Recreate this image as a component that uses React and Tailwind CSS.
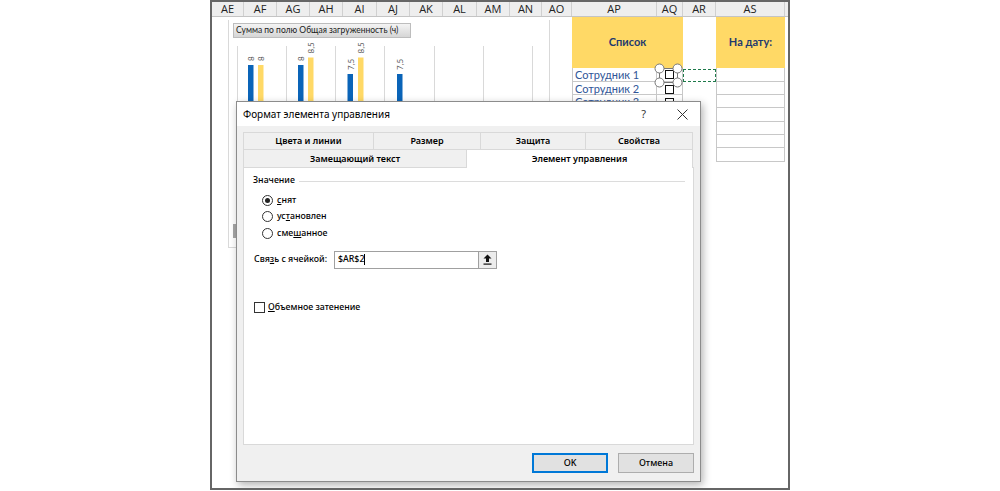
import React from 'react';

const cols = [
  { l: 'AE', w: 'w-[32px]' },
  { l: 'AF', w: 'w-[33px]' },
  { l: 'AG', w: 'w-[33px]' },
  { l: 'AH', w: 'w-[33px]' },
  { l: 'AI', w: 'w-[34px]' },
  { l: 'AJ', w: 'w-[33px]' },
  { l: 'AK', w: 'w-[33px]' },
  { l: 'AL', w: 'w-[34px]' },
  { l: 'AM', w: 'w-[33px]' },
  { l: 'AN', w: 'w-[32px]' },
  { l: 'AO', w: 'w-[30px]' },
  { l: 'AP', w: 'w-[85px]' },
  { l: 'AQ', w: 'w-[26px]' },
  { l: 'AR', w: 'w-[33px]' },
  { l: 'AS', w: 'w-[69px]' },
];

const rows = [
  { h: 'h-[14px]', name: 'Сотрудник 1' },
  { h: 'h-[13px]', name: 'Сотрудник 2' },
  { h: 'h-[13px]', name: 'Сотрудник 3' },
  { h: 'h-[14px]', name: '' },
  { h: 'h-[13px]', name: '' },
  { h: 'h-[13px]', name: '' },
  { h: 'h-[14px]', name: '' },
];

const bars = [
  { x: 19, top: 45, c: '#0a64b8', t: '8' },
  { x: 29, top: 45, c: '#ffd966', t: '8' },
  { x: 69, top: 45, c: '#0a64b8', t: '8' },
  { x: 79, top: 37.5, c: '#ffd966', t: '8,5' },
  { x: 118.5, top: 54, c: '#0a64b8', t: '7,5' },
  { x: 129, top: 37.5, c: '#ffd966', t: '8,5' },
  { x: 168, top: 54, c: '#0a64b8', t: '7,5' },
];

const grid = [8, 57, 106, 155, 205, 254, 303];

function Chart() {
  return (
    <div className="absolute left-[16px] top-[3px] w-[322px] h-[228px] bg-white border-x border-b border-[#d9d9d9]">
      <svg className="absolute left-0 top-0" width="322" height="228">
        {grid.map((g) => (
          <line key={g} x1={g + 0.5} y1="26" x2={g + 0.5} y2="228" stroke="#d9d9d9" strokeWidth="1" />
        ))}
        {bars.map((b, i) => (
          <g key={i}>
            <rect x={b.x} y={b.top} width="5.5" height="160" fill={b.c} />
            <text
              transform={`translate(${b.x + 3.2} ${b.top - 4}) rotate(-90)`}
              fontSize="8"
              fill="#595959"
              fontFamily="Lato, 'Liberation Sans', sans-serif"
              dominantBaseline="central"
            >
              {b.t}
            </text>
          </g>
        ))}
        <rect x="4" y="204" width="4" height="14" fill="#a6a6a6" />
      </svg>
      <div className="absolute left-[4px] top-[3px] w-[178px] h-[15px] border border-[#bdbdbd] bg-gradient-to-b from-[#f4f4f4] to-[#d6d6d6] flex items-center pl-[2px] text-[8.5px] text-[#1a1a1a] font-['Lato','Liberation_Sans',sans-serif] whitespace-nowrap">
        Сумма по полю Общая загруженность (ч)
      </div>
    </div>
  );
}

function Radio({ checked, children }) {
  return (
    <div className="flex items-center h-[16.5px] pl-[18px]">
      <div className="w-[11px] h-[11px] rounded-full border border-[#333] bg-white flex items-center justify-center">
        {checked && <div className="w-[5px] h-[5px] rounded-full bg-[#222]" />}
      </div>
      <span className="ml-[4px]">{children}</span>
    </div>
  );
}

function Dialog() {
  const tab1 = [
    { t: 'Цвета и линии', w: 'w-[131px]' },
    { t: 'Размер', w: 'w-[107px]' },
    { t: 'Защита', w: 'w-[105px]' },
    { t: 'Свойства', w: 'w-[107px]' },
  ];
  return (
    <div className="absolute left-[24px] top-[84px] w-[465px] h-[381px] border border-[#8c8c8c] bg-[#f0f0f0] shadow-[2px_3px_8px_rgba(0,0,0,0.3)] flex flex-col font-['Noto_Sans','Open_Sans',sans-serif] text-black">
      <div className="h-[24px] bg-white flex items-center pl-[6px] shrink-0">
        <span className="text-[10px]">Формат элемента управления</span>
        <span className="ml-auto text-[11px] text-[#333] mr-[31px]">?</span>
        <svg width="11" height="11" className="mr-[12px]" viewBox="0 0 11 11">
          <path d="M0.5 0.5 L10.5 10.5 M10.5 0.5 L0.5 10.5" stroke="#333" strokeWidth="1" />
        </svg>
      </div>
      <div className="flex flex-col px-[6px] pt-[6px] flex-1">
        <div className="flex h-[17px] text-[9px] font-semibold">
          {tab1.map((t, i) => (
            <div
              key={t.t}
              className={`${t.w} border-t border-r border-[#d9d9d9] flex items-center justify-center ${i === 0 ? 'border-l' : ''}`}
            >
              {t.t}
            </div>
          ))}
        </div>
        <div className="flex h-[18px] text-[9px] font-semibold items-end">
          <div className="w-[223px] h-[18px] border-t border-l border-[#d9d9d9] flex items-center justify-center">
            Замещающий текст
          </div>
          <div className="w-[227px] h-[19px] -mb-px bg-white border-t border-x border-[#d9d9d9] flex items-center justify-center relative z-10">
            Элемент управления
          </div>
        </div>
        <div className="h-[278px] bg-white border border-[#d9d9d9] flex flex-col pt-[6px] text-[8.8px] font-medium">
          <div className="flex items-center h-[14px] pl-[9px] pr-[8px]">
            <span>Значение</span>
            <div className="flex-1 h-px bg-[#dcdcdc] ml-[4px]" />
          </div>
          <div className="mt-[4px] flex flex-col">
            <Radio checked>
              <span className="underline">с</span>нят
            </Radio>
            <Radio>
              ус<span className="underline">т</span>ановлен
            </Radio>
            <Radio>
              сме<span className="underline">ш</span>анное
            </Radio>
          </div>
          <div className="mt-[9px] flex items-center h-[18px] pl-[10px]">
            <span className="w-[80px]">
              Свя<span className="underline">з</span>ь с ячейкой:
            </span>
            <div className="w-[145px] h-[18px] border border-[#a0a0a0] bg-white flex items-center pl-[3px]">
              <span>$AR$2</span>
              <div className="w-px h-[11px] bg-black" />
            </div>
            <div className="w-[18px] h-[18px] border border-[#a0a0a0] border-l-0 bg-[#ececec] flex items-center justify-center">
              <svg width="9" height="11" viewBox="0 0 9 11">
                <path d="M4.5 0.5 L8.5 4.5 L6 4.5 L6 8 L3 8 L3 4.5 L0.5 4.5 Z" fill="#111" />
                <rect x="0.5" y="9.5" width="8" height="1.2" fill="#111" />
              </svg>
            </div>
          </div>
          <div className="mt-[33px] flex items-center h-[12px] pl-[10px]">
            <div className="w-[11px] h-[11px] border border-[#333] bg-white" />
            <span className="ml-[3px]">
              <span className="underline">О</span>бъемное затенение
            </span>
          </div>
        </div>
        <div className="flex justify-end gap-[10px] mt-[8px] text-[9px] font-medium">
          <div className="w-[76px] h-[20px] bg-[#e1e1e1] border-2 border-[#0078d7] flex items-center justify-center">
            OK
          </div>
          <div className="w-[76px] h-[20px] bg-[#e1e1e1] border border-[#adadad] flex items-center justify-center">
            Отмена
          </div>
        </div>
      </div>
    </div>
  );
}

export default function App() {
  return (
    <div className="w-[1000px] h-[491px] bg-white flex">
      <div className="ml-[210px] w-[580px] h-[490px] border-2 border-[#666] flex flex-col overflow-hidden">
        <div className="flex h-[15px] bg-[#eeeeee] border-b border-[#c4c4c4] shrink-0 font-['Open_Sans','Noto_Sans',sans-serif] text-[11px] font-medium text-[#222]">
          {cols.map((c) => (
            <div key={c.l} className={`${c.w} shrink-0 border-r border-[#d0d0d0] flex items-center justify-center`}>
              {c.l}
            </div>
          ))}
          <div className="flex-1" />
        </div>
        <div className="relative flex-1 bg-white font-['Lato','Liberation_Sans',sans-serif]">
          <div className="flex h-[51px]">
            <div className="w-[360px] shrink-0" />
            <div className="w-[111px] shrink-0 bg-[#ffd966] flex items-center justify-center text-[11px] font-bold text-[#1f3a6e]">
              Список
            </div>
            <div className="w-[33px] shrink-0" />
            <div className="w-[69px] shrink-0 bg-[#ffd966] flex items-center justify-center text-[11px] font-bold text-[#1f3a6e]">
              На дату:
            </div>
          </div>
          {rows.map((r, i) => (
            <div key={i} className={`flex ${r.h}`}>
              <div className="w-[360px] shrink-0" />
              <div className="w-[85px] shrink-0 border-b border-l border-r border-[#c8c8c8] flex items-center pl-[2px] text-[11px] text-[#2f5597] leading-none">
                {r.name}
              </div>
              <div className="w-[26px] shrink-0 border-b border-r border-[#c8c8c8]" />
              <div className="w-[33px] shrink-0" />
              <div className="w-[69px] shrink-0 border-b border-x border-[#c8c8c8]" />
            </div>
          ))}
          <Chart />
          <svg className="absolute left-[440px] top-[45px]" width="32" height="50">
            <rect x="13.5" y="8.5" width="8" height="8" fill="white" stroke="#111" />
            <rect x="13.5" y="23.5" width="8" height="8" fill="white" stroke="#111" />
            <rect x="13.5" y="36.5" width="8" height="8" fill="white" stroke="#111" />
            <rect x="7.5" y="6.5" width="18" height="14" fill="none" stroke="#777" />
            <circle cx="7.5" cy="6.5" r="4.5" fill="white" stroke="#777" />
            <circle cx="25.5" cy="6.5" r="4.5" fill="white" stroke="#777" />
            <circle cx="7.5" cy="20.5" r="4.5" fill="white" stroke="#777" />
            <circle cx="25.5" cy="20.5" r="4.5" fill="white" stroke="#777" />
          </svg>
          <div className="absolute left-[471px] top-[52px] w-[33px] h-[13px] border-[1.5px] border-dashed border-[#1e7a4a]" />
          <Dialog />
        </div>
      </div>
    </div>
  );
}
